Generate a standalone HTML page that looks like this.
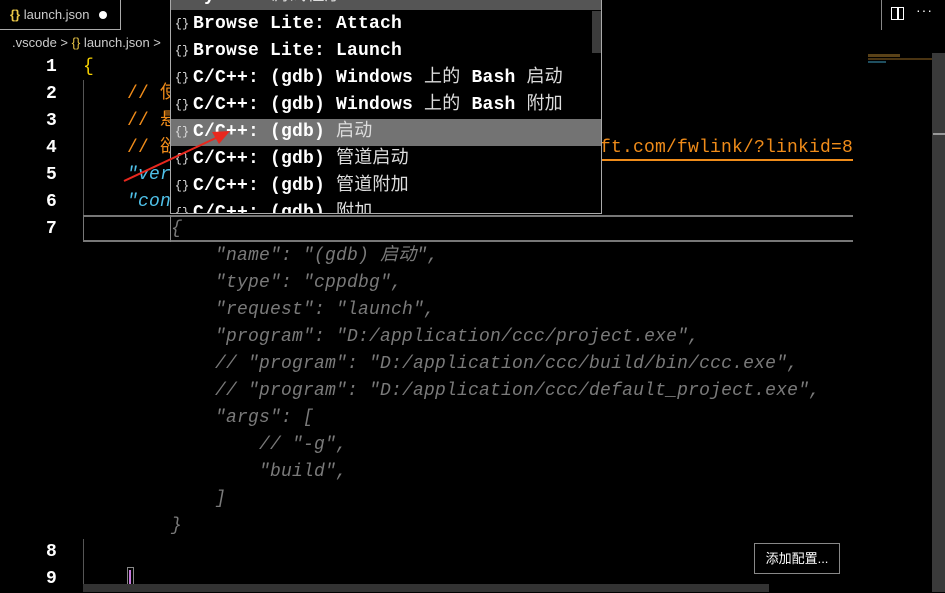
<!DOCTYPE html>
<html><head><meta charset="utf-8"><style>
*{margin:0;padding:0;box-sizing:border-box}
body{width:945px;height:592px;background:#000;overflow:hidden;position:relative;font-family:"Liberation Mono","Noto Sans CJK SC",monospace;font-size:18px;color:#fff;letter-spacing:0.2px}
.a{position:absolute;white-space:pre;line-height:27px}
.ln{position:absolute;width:57px;text-align:right;left:0;font-weight:bold;color:#fff}
.g{color:#7a7a7a;font-style:italic}
.pop .r{position:absolute;left:0;width:421px;height:27px;line-height:27px;font-weight:bold;color:#fff;white-space:pre}
.pop .r i{font-style:normal;font-weight:normal;color:#ddd}
.ic{font-size:12px;font-weight:normal;color:#ddd;display:inline-block;width:22px;text-align:center;vertical-align:top;letter-spacing:0}
</style></head><body>
<!-- tab -->
<div style="position:absolute;left:0;top:0;width:121px;height:30px;border-right:1px solid #aaa;border-bottom:1px solid #aaa;font-family:'Liberation Sans',sans-serif;font-size:13px;color:#ccc;line-height:30px;padding-left:10px;letter-spacing:0"><span style="color:#e8c547;font-weight:bold">{}</span> launch.json <span style="margin-left:6px;display:inline-block;width:8px;height:8px;border-radius:50%;background:#fff"></span></div>
<div style="position:absolute;left:881px;top:0;width:1px;height:30px;background:#888"></div>
<div style="position:absolute;left:891px;top:7px;width:13px;height:13px;border:1.5px solid #fff"></div>
<div style="position:absolute;left:897px;top:7px;width:1.5px;height:13px;background:#fff"></div>
<div style="position:absolute;left:916px;top:2px;color:#fff;font-size:14px;font-family:'Liberation Sans';letter-spacing:1px">···</div>
<!-- breadcrumb -->
<div style="position:absolute;left:12px;top:34px;font-family:'Liberation Sans',sans-serif;font-size:13px;color:#ccc;white-space:pre;line-height:18px;letter-spacing:0">.vscode &gt; <span style="color:#e8c547">{}</span> launch.json &gt;</div>
<!-- line numbers -->
<div class="ln a" style="top:54px">1</div>
<div class="ln a" style="top:81px">2</div>
<div class="ln a" style="top:108px">3</div>
<div class="ln a" style="top:135px">4</div>
<div class="ln a" style="top:162px">5</div>
<div class="ln a" style="top:189px">6</div>
<div class="ln a" style="top:216px">7</div>
<div class="ln a" style="top:539px">8</div>
<div class="ln a" style="top:566px">9</div>
<!-- guides -->
<div style="position:absolute;left:83px;top:80px;width:1px;height:136px;background:#555"></div>
<div style="position:absolute;left:83px;top:539px;width:1px;height:53px;background:#555"></div>
<!-- code -->
<div class="a" style="left:83px;top:54px;color:#f5d000">{</div>
<div class="a" style="left:127px;top:81px;color:#f08c1a">// 使用 IntelliSense 了解相关属性。</div>
<div class="a" style="left:127px;top:108px;color:#f08c1a">// 悬停以查看现有属性的描述。</div>
<div class="a" style="left:127px;top:135px;color:#f08c1a">// 欲了解更多信息，请访问:</div>
<div class="a" style="left:600px;top:135px;color:#f08c1a;width:253px;overflow:hidden">ft.com/fwlink/?linkid=830387</div>
<div style="position:absolute;left:600px;top:159px;width:253px;height:2px;background:#f08c1a"></div>
<div class="a" style="left:127px;top:162px;color:#4fc1e9;font-style:italic">"version": "0.2.0",</div>
<div class="a" style="left:127px;top:189px;color:#4fc1e9;font-style:italic">"configurations": [</div>
<!-- line 7 box -->
<div style="position:absolute;left:83px;top:215px;width:770px;height:27px;border-top:2px solid #777;border-bottom:2px solid #777;border-left:1px solid #777"></div>
<div style="position:absolute;left:170px;top:215px;width:1px;height:27px;background:#888"></div>
<div class="a g" style="left:171px;top:216px">{</div>
<div class="a g" style="left:215px;top:243px">"name": "(gdb) 启动",
"type": "cppdbg",
"request": "launch",
"program": "D:/application/ccc/project.exe",
// "program": "D:/application/ccc/build/bin/ccc.exe",
// "program": "D:/application/ccc/default_project.exe",
"args": [
    // "-g",
    "build",
]</div>
<div class="a g" style="left:171px;top:513px">}</div>
<div style="position:absolute;left:127px;top:567px;width:7px;height:25px;border:1px solid #888"></div>
<div style="position:absolute;left:129px;top:570px;width:2px;height:18px;background:#c678dd"></div>
<div style="position:absolute;left:83px;top:584px;width:686px;height:8px;background:#333"></div>
<!-- button -->
<div style="position:absolute;left:754px;top:543px;width:86px;height:31px;border:1px solid #888;font-family:'Liberation Sans','Noto Sans CJK SC',sans-serif;font-size:13px;color:#fff;text-align:center;line-height:29px;letter-spacing:0;background:#000">添加配置...</div>
<!-- minimap / scrollbar -->
<div style="position:absolute;left:868px;top:54px;width:32px;height:3px;background:#5a4218"></div>
<div style="position:absolute;left:868px;top:58px;width:64px;height:2px;background:#4a3412"></div>
<div style="position:absolute;left:868px;top:61px;width:18px;height:2px;background:#1f4f60"></div>
<div style="position:absolute;left:932px;top:53px;width:13px;height:539px;background:#3a3a3a"></div>
<div style="position:absolute;left:933px;top:133px;width:12px;height:2px;background:#999"></div>
<!-- popup -->
<div class="pop" style="position:absolute;left:170px;top:-1px;width:432px;height:215px;background:#000;border:1px solid #aaa;overflow:hidden">
<div class="r" style="top:-17px;background:#555;width:430px"><span class="ic">▤</span>Python <i>调试程序</i></div>
<div class="r" style="top:11px"><span class="ic">{}</span>Browse Lite: Attach</div>
<div class="r" style="top:38px"><span class="ic">{}</span>Browse Lite: Launch</div>
<div class="r" style="top:65px"><span class="ic">{}</span>C/C++: (gdb) Windows <i>上的</i> Bash <i>启动</i></div>
<div class="r" style="top:92px"><span class="ic">{}</span>C/C++: (gdb) Windows <i>上的</i> Bash <i>附加</i></div>
<div class="r" style="top:119px;background:#737373;width:430px"><span class="ic">{}</span>C/C++: (gdb) <i>启动</i></div>
<div class="r" style="top:146px"><span class="ic">{}</span>C/C++: (gdb) <i>管道启动</i></div>
<div class="r" style="top:173px"><span class="ic">{}</span>C/C++: (gdb) <i>管道附加</i></div>
<div class="r" style="top:200px"><span class="ic">{}</span>C/C++: (gdb) <i>附加</i></div>
<div style="position:absolute;left:421px;top:11px;width:9px;height:42px;background:#3c3c3c"></div>
</div>
<!-- arrow -->
<svg style="position:absolute;left:0;top:0" width="945" height="592"><line x1="124" y1="181" x2="218" y2="137" stroke="#e8281e" stroke-width="2"/><polygon points="230,131 212,132 219,144" fill="#e8281e"/></svg>
</body></html>
